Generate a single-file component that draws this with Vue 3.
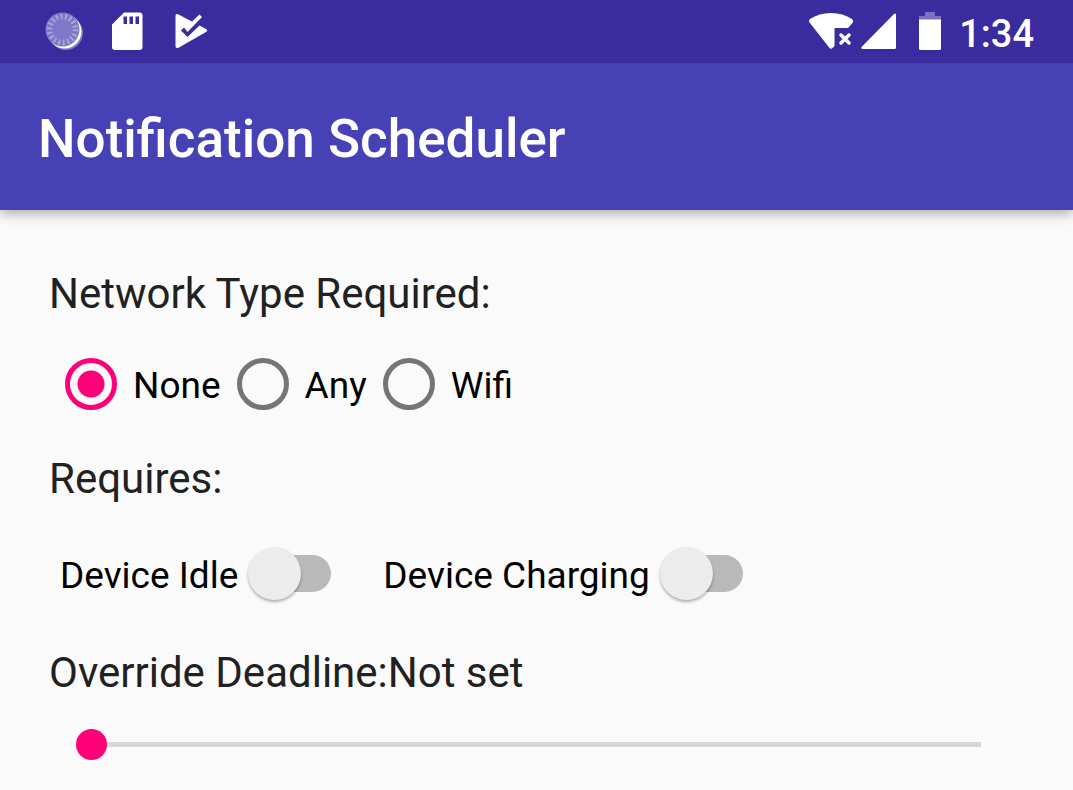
<script setup>
import { ref } from 'vue'
const network = ref('None')
const idle = ref(false)
const charging = ref(false)
const deadline = ref(0)
</script>

<template>
  <div class="screen">
    <div class="status">
      <div class="left">
        <svg viewBox="0 0 40 39" width="40" height="39"><circle cx="21" cy="21" r="17" fill="#7f7bc6"/><circle cx="19.500" cy="19.500" r="17" fill="#fff"/><circle cx="17.500" cy="17.500" r="17" fill="#7d79c6"/><circle cx="17.500" cy="17.500" r="13" fill="none" stroke="#a9a6da" stroke-width="5.500" stroke-dasharray="1.800 2.738"/></svg>
        <svg viewBox="0 0 36 39" width="36" height="39"><path fill="#fff" fill-rule="evenodd" d="M12 .5H27.500Q30.500 .5 30.500 3.500V35Q30.500 38 27.500 38H3Q0 38 0 35V12.500ZM11.500 4.500V12H15V4.500ZM17.500 4.500V12H21V4.500ZM23.500 4.500V12H27V4.500Z"/></svg>
        <svg viewBox="0 0 34 39" width="34" height="39"><path fill="#fff" d="M.5 4Q.5 1 3.500 2.500L17 9.500L24.500 2.500L27 5L12.500 20L9 15.500L6 18.500L12.500 25L24.500 13.500L31 17Q33.500 18.500 31 20L4 35.500Q.5 37 .5 34Z"/></svg>
      </div>
      <div class="right">
        <svg viewBox="0 0 46 39" width="46" height="39"><path fill="#fff" d="M1 11Q-1 9 1 7Q10 1 22 1T43 7Q45 9 43.500 11L39 16H25.500V34L23.500 36Q22 37.500 20.500 36Z"/><path d="M32 23L40 31M40 23L32 31" stroke="#fff" stroke-width="3.500" stroke-linecap="round"/></svg>
        <svg viewBox="0 0 36 39" width="36" height="39"><path fill="#fff" d="M32.500 2.500Q35 .5 35 3V35.500Q35 37 33.500 37H2Q-1 37 1 34.500Z"/></svg>
        <svg class="battery" viewBox="0 0 24 39" width="24" height="39"><path fill="#7872c0" d="M7 0H17V4H23V8H1V4H7Z"/><path d="M1 7.500H23V36.500Q23 38 21.500 38H2.500Q1 38 1 36.500Z" fill="#fff"/></svg>
        <span class="time">1:34</span>
      </div>
    </div>
    <header><h1>Notification Scheduler</h1></header>
    <main>
      <h2 id="net">Network Type Required:</h2>
      <div class="radios" role="radiogroup" aria-labelledby="net">
        <label v-for="n in ['None', 'Any', 'Wifi']" :key="n"><input v-model="network" type="radio" name="network" :value="n"><span>{{ n }}</span></label>
      </div>
      <h2>Requires:</h2>
      <div class="switches">
        <label><span>Device Idle</span><input v-model="idle" type="checkbox" role="switch"></label>
        <label><span>Device Charging</span><input v-model="charging" type="checkbox" role="switch"></label>
      </div>
      <h2><label for="deadline">Override Deadline:</label><span>{{ Number(deadline) ? deadline + ' s' : 'Not set' }}</span></h2>
      <input id="deadline" v-model="deadline" class="slider" type="range" min="0" max="100">
    </main>
  </div>
</template>

<style>
body { margin: 0; background: #fafafa; }
</style>

<style scoped>
.screen { font-family: Roboto, "Liberation Sans", sans-serif; color: #212121; background: #fafafa; overflow: hidden; }
.status { position: relative; z-index: 1; display: flex; justify-content: space-between; align-items: center; height: 63px; box-sizing: border-box; padding: 0 39px 0 45px; background: #3a2c9f; color: #fff; }
.left, .right { display: flex; align-items: center; }
.left { gap: 27px; }
.right { gap: 6px; }
.battery { margin: 0 11px 0 15px; }
.time { padding-top: 4px; font-size: 38px; font-weight: 500; line-height: 44px; }
header { background: #4641b5; color: #fff; height: 147px; box-sizing: border-box; display: flex; align-items: center; padding: 4px 38px 0; box-shadow: 0 3px 12px rgba(0,0,0,.35); }
h1 { margin: 0; font-size: 53px; font-weight: 500; line-height: 62px; }
main { padding: 58px 49px 20px; }
h2 { margin: 0; font-size: 42px; font-weight: 400; line-height: 52px; }
.radios, .switches { display: flex; align-items: center; color: #000; font-size: 37px; line-height: 44px; }
.radios span, .switches span { padding-top: 4px; }
.radios { gap: 16px; padding: 38px 16px 43px; }
.radios label { display: flex; align-items: center; gap: 16px; }
.radios input { appearance: none; width: 52px; height: 52px; margin: 0; border: 5px solid #757575; border-radius: 50%; }
.radios input:checked { border-color: #ff0078; background: radial-gradient(circle, #ff0078 13px, transparent 14px); }
.switches { gap: 52px; padding: 40px 11px 44px; }
.switches label { display: flex; align-items: center; gap: 10px; height: 58px; }
.switches input { appearance: none; position: relative; width: 83px; height: 54px; margin: 0; }
.switches input::before { content: ""; position: absolute; left: 8px; right: 0; top: 8px; height: 37px; border-radius: 19px; background: #b9b9b9; }
.switches input::after { content: ""; position: absolute; left: 0; top: 0; width: 53px; height: 53px; border-radius: 50%; background: #ececec; box-shadow: 0 2px 3px rgba(0,0,0,.3); }
.switches input:checked::after { left: 30px; background: #ff0078; }
.slider { appearance: none; display: block; width: calc(100% - 70px); height: 31px; margin: 30px 43px 0 27px; background: linear-gradient(#d6d6d6, #d6d6d6) center / 100% 5px no-repeat; }
.slider::-webkit-slider-thumb { appearance: none; width: 31px; height: 31px; border-radius: 50%; background: #ff0078; }
</style>
